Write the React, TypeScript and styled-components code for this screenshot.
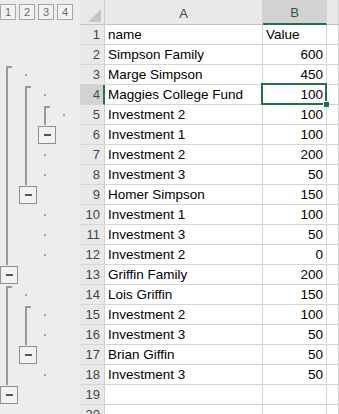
import React, { FC, Fragment } from 'react'
import styled, { createGlobalStyle } from 'styled-components'

type Slot = 'empty' | 'start' | 'line' | 'dot' | 'button'

const GlobalStyle = createGlobalStyle`
  html, body {
    margin: 0;
    padding: 0;
    background: #ffffff;
    overflow: hidden;
  }
  body {
    font-family: "Liberation Sans", Arial, sans-serif;
  }
`

const Page = styled.div`
  display: flex;
  width: 339px;
  height: 414px;
  overflow: hidden;
`

const OutlinePanel = styled.div`
  width: 80px;
  flex: none;
  background: #ededed;
  display: flex;
  flex-direction: column;
`

const LevelBar = styled.div`
  height: 25px;
  flex: none;
  display: flex;
  gap: 3px;
  padding-top: 4px;
  box-sizing: border-box;
`

const LevelButton = styled.div`
  width: 16px;
  height: 16px;
  box-sizing: border-box;
  border: 1px solid #a6a6a6;
  background: #f2f2f2;
  color: #6a6a6a;
  font-size: 11px;
  line-height: 14px;
  text-align: center;
`

const OutlineRow = styled.div`
  height: 20px;
  flex: none;
  display: grid;
  grid-template-columns: repeat(4, 19px);
`

const SlotCell = styled.div`
  display: flex;
  align-items: stretch;
  height: 20px;
`

const VLine = styled.span`
  margin-left: 6px;
  width: 2px;
  background: #9a9a9a;
`

const Bracket = styled.span`
  margin-left: 6px;
  margin-top: 1px;
  width: 6px;
  box-sizing: border-box;
  border-left: 2px solid #9a9a9a;
  border-top: 2px solid #9a9a9a;
`

const Dot = styled.span`
  margin-left: 6px;
  align-self: center;
  width: 2px;
  height: 2px;
  background: #a3a3a3;
`

const MinusBox = styled.span`
  align-self: center;
  width: 18px;
  height: 18px;
  box-sizing: border-box;
  border: 1px solid #8f8f8f;
  background: #f2f2f2;
  display: flex;
  align-items: center;
  justify-content: center;
  &::before {
    content: '';
    width: 7px;
    height: 2px;
    background: #555555;
  }
`

const Sheet = styled.div`
  flex: 1;
  display: grid;
  grid-template-columns: 25px 158px 64px 1fr;
  grid-template-rows: 25px;
  grid-auto-rows: 20px;
  font-size: 13.5px;
  color: #000000;
`

const Corner = styled.div`
  background: #e9e9e9;
  border-right: 1px solid #d0d0d0;
  border-bottom: 1px solid #c4c4c4;
  box-sizing: border-box;
  display: flex;
  align-items: flex-end;
  justify-content: flex-end;
  padding: 0 3px 2px 0;
  &::after {
    content: '';
    width: 0;
    height: 0;
    border-left: 13px solid transparent;
    border-bottom: 13px solid #c6c6c6;
  }
`

const ColHeader = styled.div<{ $selected?: boolean }>`
  background: ${(p) => (p.$selected ? '#d2d2d2' : '#e9e9e9')};
  color: ${(p) => (p.$selected ? '#1f5e3b' : '#444444')};
  border-right: 1px solid #d0d0d0;
  border-bottom: ${(p) => (p.$selected ? '2px solid #217346' : '1px solid #c4c4c4')};
  box-sizing: border-box;
  display: flex;
  align-items: center;
  justify-content: center;
  font-size: 13px;
  padding-top: 2px;
`

const RowHeader = styled.div<{ $selected?: boolean }>`
  background: ${(p) => (p.$selected ? '#d2d2d2' : '#e9e9e9')};
  color: ${(p) => (p.$selected ? '#1f5e3b' : '#444444')};
  border-right: ${(p) => (p.$selected ? '2px solid #217346' : '1px solid #d0d0d0')};
  border-bottom: 1px solid #d6d6d6;
  box-sizing: border-box;
  text-align: right;
  padding-right: ${(p) => (p.$selected ? '3px' : '4px')};
  font-size: 13px;
  line-height: 19px;
`

const Cell = styled.div<{ $align?: 'left' | 'right'; $active?: boolean }>`
  position: relative;
  border-right: 1px solid #d4d4d4;
  border-bottom: 1px solid #d4d4d4;
  box-sizing: border-box;
  text-align: ${(p) => p.$align || 'left'};
  padding: 0 3px;
  line-height: 19px;
  white-space: nowrap;
  overflow: visible;
  ${(p) =>
    p.$active &&
    `
    &::before {
      content: '';
      position: absolute;
      top: -2px;
      left: -2px;
      right: -1px;
      bottom: -1px;
      border: 2px solid #217346;
      z-index: 1;
    }
    &::after {
      content: '';
      position: absolute;
      right: -3px;
      bottom: -3px;
      width: 5px;
      height: 5px;
      background: #217346;
      border-left: 1px solid #ffffff;
      border-top: 1px solid #ffffff;
      z-index: 2;
    }
  `}
`

const rows: [string, string | number | null][] = [
  ['name', 'Value'],
  ['Simpson Family', 600],
  ['Marge Simpson', 450],
  ['Maggies College Fund', 100],
  ['Investment 2', 100],
  ['Investment 1', 100],
  ['Investment 2', 200],
  ['Investment 3', 50],
  ['Homer Simpson', 150],
  ['Investment 1', 100],
  ['Investment 3', 50],
  ['Investment 2', 0],
  ['Griffin Family', 200],
  ['Lois Griffin', 150],
  ['Investment 2', 100],
  ['Investment 3', 50],
  ['Brian Giffin', 50],
  ['Investment 3', 50],
  ['', null],
  ['', null],
]

// one string per row, one char per outline level
// s = bracket start, | = line, o = dot, b = collapse button
const outline = [
  '    ', '    ', 'so  ', '|so ', '||so', '||b ', '||o ', '||o ', '|b  ', '| o ',
  '| o ', '| o ', 'b   ', 'so  ', '|so ', '||o ', '|b  ', '| o ', 'b   ', '    ',
]

const slotKind = (c: string): Slot =>
  c === 's' ? 'start' : c === '|' ? 'line' : c === 'o' ? 'dot' : c === 'b' ? 'button' : 'empty'

const OutlineSlot: FC<{ kind: Slot }> = ({ kind }) => (
  <SlotCell>
    {kind === 'start' && <Bracket />}
    {kind === 'line' && <VLine />}
    {kind === 'dot' && <Dot />}
    {kind === 'button' && <MinusBox />}
  </SlotCell>
)

const App: FC = () => {
  return (
    <Fragment>
      <GlobalStyle />
      <Page>
        <OutlinePanel>
          <LevelBar>
            {[1, 2, 3, 4].map((n) => (
              <LevelButton key={n}>{n}</LevelButton>
            ))}
          </LevelBar>
          {outline.map((line, i) => (
            <OutlineRow key={i}>
              {line.split('').map((c, j) => (
                <OutlineSlot key={j} kind={slotKind(c)} />
              ))}
            </OutlineRow>
          ))}
        </OutlinePanel>
        <Sheet>
          <Corner />
          <ColHeader>A</ColHeader>
          <ColHeader $selected>B</ColHeader>
          <ColHeader />
          {rows.map(([name, value], i) => (
            <Fragment key={i}>
              <RowHeader $selected={i === 3}>{i + 1}</RowHeader>
              <Cell>{name}</Cell>
              <Cell $align={typeof value === 'number' ? 'right' : 'left'} $active={i === 3}>
                {value}
              </Cell>
              <Cell />
            </Fragment>
          ))}
        </Sheet>
      </Page>
    </Fragment>
  )
}

export default App
